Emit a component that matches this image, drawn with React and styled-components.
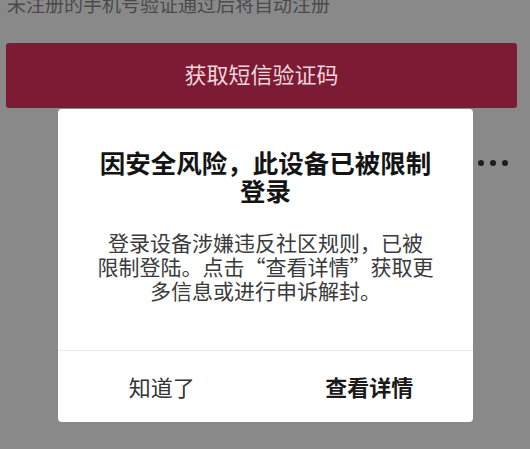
import React from 'react';
import styled, { createGlobalStyle } from 'styled-components';

const GlobalStyle = createGlobalStyle`
  html, body {
    margin: 0;
    padding: 0;
    background: #898989;
  }
  body {
    font-family: 'Noto Sans CJK SC', 'Noto Sans', sans-serif;
  }
`;

const Page = styled.div`
  position: relative;
  width: 530px;
  height: 449px;
  overflow: hidden;
  background: #898989;
`;

const Hint = styled.div`
  margin-top: -9px;
  padding-left: 7px;
  font-size: 19px;
  line-height: 26px;
  color: #4a4a4a;
  white-space: nowrap;
`;

const SmsButton = styled.div`
  margin: 26px 13px 0 6px;
  height: 65px;
  padding-bottom: 5px;
  box-sizing: border-box;
  border-radius: 3px;
  background: #7d1b34;
  display: flex;
  align-items: center;
  justify-content: center;
  font-size: 22px;
  color: #ecd6dc;
`;

const MoreRow = styled.div`
  display: flex;
  justify-content: flex-end;
  gap: 6px;
  padding: 52px 22px 0 0;
`;

const Dot = styled.span`
  width: 6px;
  height: 6px;
  border-radius: 50%;
  background: #1e1e1e;
`;

const Dialog = styled.div`
  position: absolute;
  left: 58px;
  top: 109px;
  width: 415px;
  background: #ffffff;
  border-radius: 4px;
  display: flex;
  flex-direction: column;
`;

const Body = styled.div`
  padding: 39px 34px 0;
  text-align: center;
  height: 241px;
  box-sizing: border-box;
`;

const Title = styled.div`
  font-size: 25.5px;
  line-height: 28px;
  font-weight: 700;
  color: #141414;
`;

const Message = styled.div`
  margin-top: 26px;
  font-size: 21px;
  line-height: 24px;
  color: #3a3a3a;
`;

const Actions = styled.div`
  border-top: 1px solid #ededed;
  display: grid;
  grid-template-columns: 1fr 1fr;
  height: 71px;
`;

const Action = styled.div`
  display: flex;
  align-items: center;
  justify-content: center;
  padding-bottom: 2px;
  font-size: 22px;
  color: ${(p) => (p.$primary ? '#1a1a1a' : '#333333')};
  font-weight: ${(p) => (p.$primary ? 700 : 400)};
`;

export default function App() {
  return (
    <Page>
      <GlobalStyle />
      <Hint>未注册的手机号验证通过后将自动注册</Hint>
      <SmsButton>获取短信验证码</SmsButton>
      <MoreRow>
        <Dot />
        <Dot />
        <Dot />
      </MoreRow>
      <Dialog>
        <Body>
          <Title>因安全风险，此设备已被限制登录</Title>
          <Message>
            登录设备涉嫌违反社区规则，已被
            <br />
            限制登陆。点击“查看详情”获取更
            <br />
            多信息或进行申诉解封。
          </Message>
        </Body>
        <Actions>
          <Action>知道了</Action>
          <Action $primary>查看详情</Action>
        </Actions>
      </Dialog>
    </Page>
  );
}
